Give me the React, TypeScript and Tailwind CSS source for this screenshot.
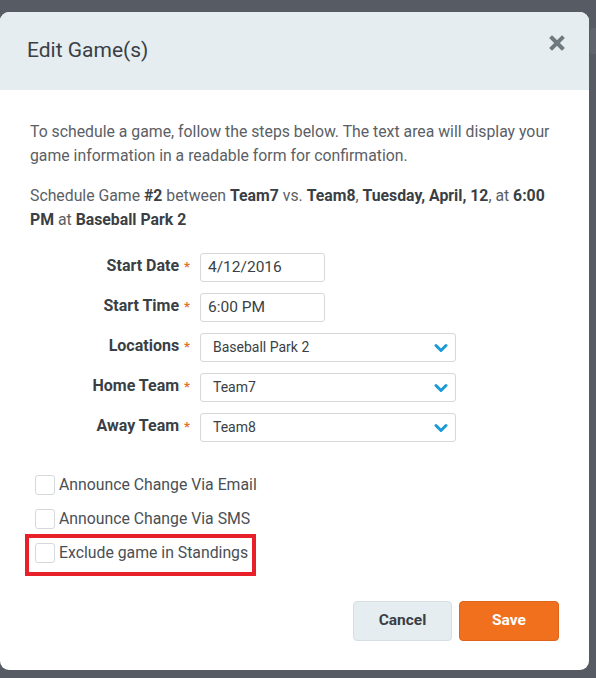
import React from "react";

const rows = [
  { label: "Start Date", value: "4/12/2016", kind: "input" },
  { label: "Start Time", value: "6:00 PM", kind: "input" },
  { label: "Locations", value: "Baseball Park 2", kind: "select" },
  { label: "Home Team", value: "Team7", kind: "select" },
  { label: "Away Team", value: "Team8", kind: "select" },
];

function Chevron() {
  return (
    <svg className="w-[14px] h-[10px]" viewBox="0 0 14 10" fill="none">
      <path d="M2 2.5l5 5 5-5" stroke="#1a9ad6" strokeWidth="3" strokeLinecap="round" strokeLinejoin="round" />
    </svg>
  );
}

function Checkbox({ label }: { label: string }) {
  return (
    <div className="flex items-center h-[34px]">
      <span className="w-[20px] h-[20px] rounded-[3px] border border-[#d5d9dc] bg-white" />
      <span className="ml-[4px] text-[15.8px] text-[#4a4f55]">{label}</span>
    </div>
  );
}

export default function App() {
  return (
    <div className="w-[596px] h-[678px] bg-[#575b63] overflow-hidden relative" style={{ fontFamily: "Roboto, 'Open Sans', sans-serif" }}>
      {/* sliver of another panel behind the modal */}
      <div className="absolute right-0 top-[28px] w-[6px] h-[26px] bg-[#60656d] rounded-l-[3px]" />

      <div className="mt-[12px] w-[589px] h-[658px] bg-white rounded-[9px] overflow-hidden flex flex-col">
        {/* Header */}
        <div className="h-[78px] bg-[#e6edf0] flex items-center justify-between pl-[27px] pr-[24px]">
          <h1 className="text-[21px] text-[#3a3f45]">Edit Game(s)</h1>
          <svg className="w-[16px] h-[16px] -mt-[17px]" viewBox="0 0 16 16">
            <path d="M3 3l10 10M13 3L3 13" stroke="#6f7a80" strokeWidth="4" strokeLinecap="square" />
          </svg>
        </div>

        {/* Body */}
        <div className="px-[30px] pt-[30px] flex flex-col">
          <p className="text-[15.8px] leading-[24px] text-[#5b6065]">
            To schedule a game, follow the steps below. The text area will display your game information in a readable form for confirmation.
          </p>
          <p className="mt-[16px] text-[15.8px] leading-[24px] text-[#5b6065]">
            Schedule Game <b className="text-[#3a3f45]">#2</b> between <b className="text-[#3a3f45]">Team7</b> vs.{" "}
            <b className="text-[#3a3f45]">Team8</b>, <b className="text-[#3a3f45]">Tuesday, April, 12</b>, at{" "}
            <b className="text-[#3a3f45]">6:00</b> <b className="text-[#3a3f45]">PM</b> at{" "}
            <b className="text-[#3a3f45]">Baseball Park 2</b>
          </p>

          <div className="mt-[21px] flex flex-col gap-[11px]">
            {rows.map((r) => (
              <div key={r.label} className="flex items-start">
                <div className="w-[160px] text-right pt-[1px] text-[16px] font-bold text-[#3a3f45]">
                  {r.label}
                  <span className="ml-[5px] text-[#e0702a] text-[13px] font-bold">*</span>
                </div>
                <div className="ml-[10px]">
                  {r.kind === "input" ? (
                    <div className="w-[125px] h-[29px] border border-[#d5d9dc] rounded-[3px] flex items-center pl-[7px] text-[15.5px] text-[#3a3f45]">
                      {r.value}
                    </div>
                  ) : (
                    <div className="w-[256px] h-[29px] border border-[#d5d9dc] rounded-[3px] flex items-center justify-between pl-[12px] pr-[7px] text-[14px] text-[#3a3f45]">
                      <span>{r.value}</span>
                      <Chevron />
                    </div>
                  )}
                </div>
              </div>
            ))}
          </div>

          <div className="mt-[26px] flex flex-col pl-[5px]">
            <Checkbox label="Announce Change Via Email" />
            <Checkbox label="Announce Change Via SMS" />
            <div className="relative">
              <Checkbox label="Exclude game in Standings" />
              <div className="absolute left-[-10px] top-[-2px] w-[231px] h-[42px] border-[4px] border-[#e8202a]" />
            </div>
          </div>

          <div className="mt-[31px] flex justify-end gap-[7px]">
            <button className="w-[99px] h-[40px] rounded-[4px] bg-[#e6edf0] border border-[#d6dfe3] text-[15.5px] font-bold text-[#3a3f45]">
              Cancel
            </button>
            <button className="w-[100px] h-[40px] rounded-[4px] bg-[#f0701e] border border-[#e0651a] text-[15.5px] font-bold text-white">
              Save
            </button>
          </div>
        </div>
      </div>
    </div>
  );
}
